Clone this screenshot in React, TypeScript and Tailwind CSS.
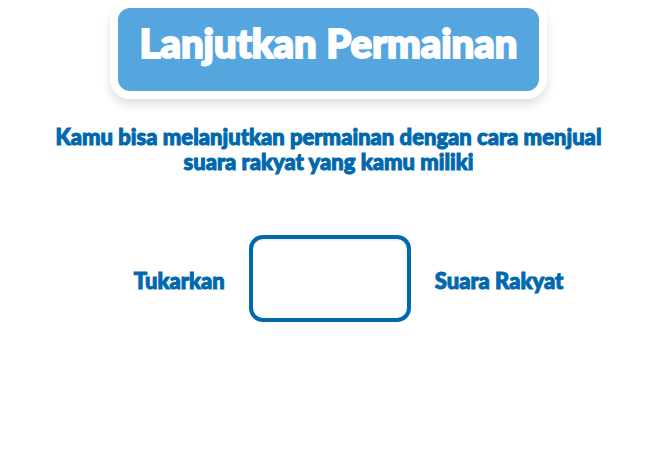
export default function App() {
  return (
    <main className="flex min-h-screen flex-col items-center bg-white font-['Lato',sans-serif] font-black text-[#0068ae] [-webkit-text-stroke:1px_currentColor]">
      <header className="rounded-[20px] border-8 border-white bg-[#55a6df] px-[22px] pt-[11px] pb-6 text-white shadow-[0_6px_10px_rgba(0,0,0,0.12)]">
        <h1 className="text-[40px] leading-12 [-webkit-text-stroke:2px_#fff]">Lanjutkan Permainan</h1>
      </header>
      <p className="mt-[25px] max-w-[600px] text-center text-[22px] leading-[25px]">
        Kamu bisa melanjutkan permainan dengan cara menjual suara rakyat yang kamu miliki
      </p>
      <form className="mt-[61px] flex items-center justify-center gap-6 pl-10 text-[22px] leading-[25px]">
        <label htmlFor="amount" className="pt-1">Tukarkan</label>
        <input
          id="amount"
          type="text"
          aria-describedby="unit"
          className="h-[87px] w-[162px] rounded-[14px] border-4 border-[#0068ae] bg-white px-3 text-center shadow-[inset_0_2px_2px_rgba(0,0,0,0.06)] outline-none"
        />
        <span id="unit" className="pt-1">Suara Rakyat</span>
      </form>
    </main>
  );
}
